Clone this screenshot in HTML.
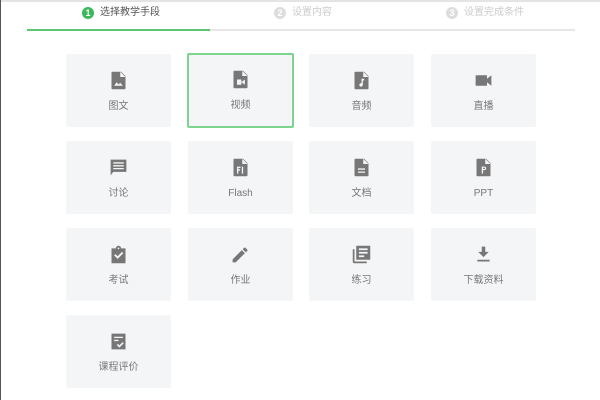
<!DOCTYPE html>
<html><head><meta charset="utf-8"><style>
*{margin:0;padding:0;box-sizing:border-box}
body{width:600px;height:400px;background:#fff;font-family:"Liberation Sans","Noto Sans CJK SC",sans-serif;position:relative;overflow:hidden}
.topline{position:absolute;left:0;top:0;width:600px;height:2px;background:#e4e4e4}
.leftline{position:absolute;left:0;top:0;width:1px;height:400px;background:#555}
.step{position:absolute;top:6px;font-size:10px;line-height:14px;color:#ccc;display:flex;align-items:center}
.step .c{width:12px;height:12px;border-radius:50%;background:#ddd;color:#fff;font-size:9px;line-height:12px;text-align:center;margin-right:6px;font-weight:bold}
.step.on{color:#555}.step.on .c{background:#3cb85b}
.bar{position:absolute;top:29px;left:27px;width:548px;height:2px;background:#e6e6e6}
.bar i{position:absolute;left:0;top:0;width:183px;height:2px;background:#5cc770}
.card{position:absolute;width:105px;height:73px;background:#f4f5f7;border-radius:2px}
.card.sel{border:2px solid #7cd48f;background:#f4f5f7}
.card svg{position:absolute;left:50%;top:16px;width:21px;height:21px;margin-left:-10.5px}
.card.sel svg{top:14px}
.card span{position:absolute;left:0;right:0;top:46px;text-align:center;font-size:10px;color:#777;line-height:14px}
.card.sel span{top:44px}
</style></head><body>
<div class="topline"></div><div class="leftline"></div>
<div class="step on" style="left:82px"><span class="c">1</span>选择教学手段</div>
<div class="step" style="left:274px"><span class="c">2</span>设置内容</div>
<div class="step" style="left:446px"><span class="c">3</span>设置完成条件</div>
<div class="bar"><i></i></div>

<div class="card" style="left:66px;top:54px"><svg viewBox="0 0 24 24"><path fill="#777" d="M5 2h10l5 5v14a1 1 0 0 1-1 1H5a1 1 0 0 1-1-1V3a1 1 0 0 1 1-1z"/><path fill="#f4f5f7" d="M14 2v6h6zM7 18l3-4 2 2.5 2-2 3 3.5z"/></svg><span>图文</span></div>
<div class="card sel" style="left:187px;top:53px;width:107px;height:75px"><svg viewBox="0 0 24 24"><path fill="#777" d="M5 2h10l5 5v14a1 1 0 0 1-1 1H5a1 1 0 0 1-1-1V3a1 1 0 0 1 1-1z"/><path fill="#f4f5f7" d="M14 2v6h6zM8 12h5v6H8zM13 15l4-3v6z"/></svg><span>视频</span></div>
<div class="card" style="left:309px;top:54px"><svg viewBox="0 0 24 24"><path fill="#777" d="M5 2h10l5 5v14a1 1 0 0 1-1 1H5a1 1 0 0 1-1-1V3a1 1 0 0 1 1-1z"/><path fill="#f4f5f7" d="M14 2v6h6z"/><path fill="#f4f5f7" d="M12 10h3v2h-1.5v5a2 2 0 1 1-1.5-1.9z"/></svg><span>音频</span></div>
<div class="card" style="left:431px;top:54px"><svg viewBox="0 0 24 24"><path fill="#777" d="M3 6h13v12H3zM16 10l5-4v12l-5-4z"/></svg><span>直播</span></div>

<div class="card" style="left:66px;top:141px"><svg viewBox="0 0 24 24"><path fill="#777" d="M3 3h18v14H6l-3 4z"/><path fill="#f4f5f7" d="M6 6h12v1.5H6zM6 9.3h12v1.5H6zM6 12.5h12V14H6z"/></svg><span>讨论</span></div>
<div class="card" style="left:188px;top:141px"><svg viewBox="0 0 24 24"><path fill="#777" d="M5 2h10l5 5v14a1 1 0 0 1-1 1H5a1 1 0 0 1-1-1V3a1 1 0 0 1 1-1z"/><path fill="#f4f5f7" d="M14 2v6h6zM8 11h4v1.5H9.5V14H11.5v1.5H9.5V19H8zM13.5 11H15v8h-1.5z"/></svg><span>Flash</span></div>
<div class="card" style="left:309px;top:141px"><svg viewBox="0 0 24 24"><path fill="#777" d="M5 2h10l5 5v14a1 1 0 0 1-1 1H5a1 1 0 0 1-1-1V3a1 1 0 0 1 1-1z"/><path fill="#f4f5f7" d="M14 2v6h6zM8 13h8v1.5H8zM8 16.5h8V18H8z"/></svg><span>文档</span></div>
<div class="card" style="left:431px;top:141px"><svg viewBox="0 0 24 24"><path fill="#777" d="M5 2h10l5 5v14a1 1 0 0 1-1 1H5a1 1 0 0 1-1-1V3a1 1 0 0 1 1-1z"/><path fill="#f4f5f7" d="M14 2v6h6zM10 11h3a2 2 0 0 1 0 4h-1.5v4H10zM11.5 12.3v1.4H13a.7.7 0 0 0 0-1.4z"/></svg><span>PPT</span></div>

<div class="card" style="left:66px;top:228px"><svg viewBox="0 0 24 24"><path fill="#777" d="M4 5h5a3 3 0 0 1 6 0h5v17H4z"/><path fill="#f4f5f7" d="M11 5a1 1 0 1 0 2 0 1 1 0 1 0-2 0zM7 13l1.5-1.5L11 14l5-5 1.5 1.5L11 17z"/></svg><span>考试</span></div>
<div class="card" style="left:188px;top:228px"><svg viewBox="0 0 24 24"><path fill="#777" d="M3 17.5V21h3.5L17 10.5 13.5 7zM19.7 7.8a1 1 0 0 0 0-1.4l-2.1-2.1a1 1 0 0 0-1.4 0L14.5 6 18 9.5z"/></svg><span>作业</span></div>
<div class="card" style="left:309px;top:228px"><svg viewBox="0 0 24 24"><path fill="#777" d="M2 6h2v14h14v2H4a2 2 0 0 1-2-2zM6 2h16v16H6z"/><path fill="#f4f5f7" d="M9 5h10v2H9zM9 9h10v2H9zM9 13h6v2H9z"/></svg><span>练习</span></div>
<div class="card" style="left:431px;top:228px"><svg viewBox="0 0 24 24"><path fill="#777" d="M10 3h4v6h4l-6 6-6-6h4zM5 18h14v2H5z"/></svg><span>下载资料</span></div>

<div class="card" style="left:66px;top:315px"><svg viewBox="0 0 24 24"><path fill="#777" d="M4 3h16v18H4z"/><path fill="#f4f5f7" d="M7 6.5h10V8H7zM7 10h5v1.5H7zM10 16l1.3-1.3 1.7 1.7 3.7-3.7L18 14l-5 5z"/></svg><span>课程评价</span></div>
</body></html>
